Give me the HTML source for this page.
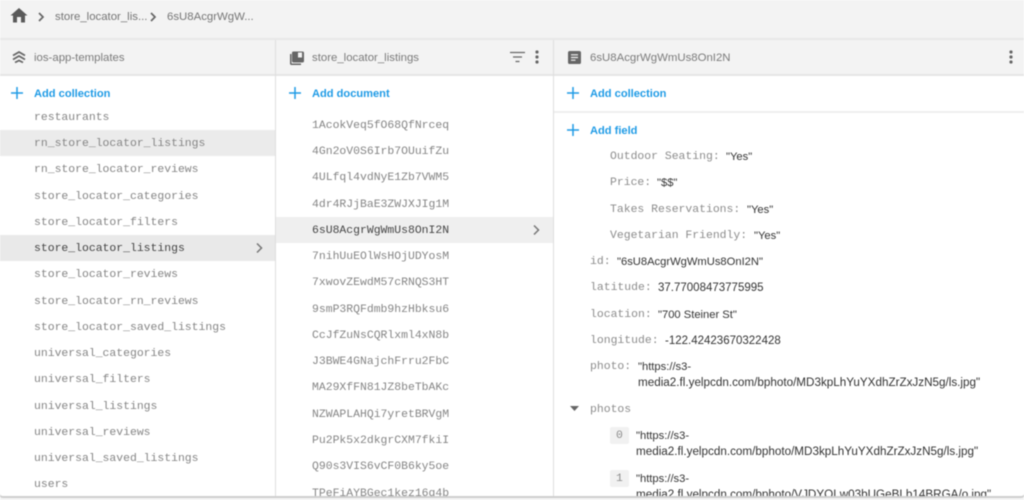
<!DOCTYPE html>
<html><head><meta charset="utf-8">
<style>
html,body{margin:0;padding:0;width:1024px;height:500px;overflow:hidden;background:#fff}
#r{position:relative;width:1024px;height:500px;overflow:hidden;background:#fff;filter:blur(0.45px)}
.a{position:absolute;white-space:nowrap}
.s{font-family:"Liberation Sans",sans-serif;font-size:11.4px;line-height:14px}
.m{font-family:"Liberation Mono",monospace;font-size:11.43px;line-height:14px;color:#858585;margin-top:1px}
.k{font-family:"Liberation Mono",monospace;font-size:11.43px;line-height:14px;color:#8c8c8c;margin-top:1px}
.v{font-family:"Liberation Sans",sans-serif;font-size:11.2px;line-height:14px;color:#333}
.u{font-size:11.68px}
.n{font-size:11.5px}
.b{color:#1f9be6;font-weight:bold;font-family:"Liberation Sans",sans-serif;font-size:11.1px;line-height:14px}
.g{color:#757575}
svg{position:absolute}
</style></head><body><div id="r">
<div class="a" style="left:0;top:0;width:1024px;height:38px;background:#f3f3f3"></div>
<div class="a" style="left:0;top:38px;width:1024px;height:2px;background:#e8e8e8"></div>
<div class="a" style="left:0;top:40px;width:1024px;height:34px;background:#f3f3f3"></div>
<div class="a" style="left:0;top:74px;width:1024px;height:2px;background:#e6e6e6"></div>
<div class="a" style="left:553px;top:111px;width:471px;height:2px;background:#efefef"></div>
<div class="a" style="left:0;top:130px;width:275px;height:26px;background:#ebebeb"></div>
<div class="a" style="left:0;top:235px;width:275px;height:26px;background:#e9e9e9"></div>
<div class="a" style="left:276px;top:217px;width:277px;height:26px;background:#efefef"></div>
<div class="a" style="left:275px;top:40px;width:1px;height:460px;background:#dedede"></div>
<div class="a" style="left:553px;top:40px;width:1px;height:460px;background:#dedede"></div>

<svg style="left:10px;top:7px" width="18" height="17" viewBox="0 0 18 17"><path d="M7 15.500V10h4v5.500h4V8.500h2.500L9 1 .5 8.500H3v7z" fill="#5a5a5a"/></svg>
<svg style="left:37px;top:12px" width="8" height="10" viewBox="0 0 8 10"><path d="M2 1l4 4-4 4" fill="none" stroke="#666" stroke-width="1.700"/></svg>
<div class="a s g" style="left:55px;top:10px">store_locator_lis...</div>
<svg style="left:149px;top:12px" width="8" height="10" viewBox="0 0 8 10"><path d="M2 1l4 4-4 4" fill="none" stroke="#666" stroke-width="1.700"/></svg>
<div class="a s g" style="left:167px;top:10px">6sU8AcgrWgW...</div>

<svg style="left:12px;top:50px" width="14" height="15" viewBox="0 0 14 15"><path d="M1 5.500L7 2l6 3.500M1 9.500L7 6l6 3.500M3 12.500L7 10.500l4 2" fill="none" stroke="#666" stroke-width="1.800"/></svg>
<div class="a s" style="left:34px;top:51px;color:#7b7b7b">ios-app-templates</div>
<svg style="left:289px;top:50px" width="16" height="16" viewBox="0 0 16 16"><path d="M1 4h1.500v9.500H12V15H2.500A1.500 1.500 0 0 1 1 13.500z" fill="#666"/><path d="M4.500 1.500h9A1.500 1.500 0 0 1 15 3v8a1.500 1.500 0 0 1-1.500 1.500h-9A1.500 1.500 0 0 1 3 11V3a1.500 1.500 0 0 1 1.500-1.500z" fill="#666"/><rect x="9" y="2.500" width="4" height="5" fill="#f3f3f3"/></svg>
<div class="a s" style="left:312px;top:51px;color:#7b7b7b">store_locator_listings</div>
<svg style="left:509px;top:50px" width="16" height="14" viewBox="0 0 16 14"><path d="M1 2.500h15M4 7h9M6.500 11.500h4" stroke="#666" stroke-width="1.300" fill="none"/></svg>
<svg style="left:533px;top:49px" width="8" height="16" viewBox="0 0 8 16"><circle cx="4" cy="3" r="1.600" fill="#666"/><circle cx="4" cy="8" r="1.600" fill="#666"/><circle cx="4" cy="13" r="1.600" fill="#666"/></svg>
<svg style="left:568px;top:51px" width="13" height="13" viewBox="0 0 13 13"><rect width="13" height="13" rx="1.800" fill="#666"/><path d="M3 3.800h7M3 6.500h7M3 9.200h4.500" stroke="#f3f3f3" stroke-width="1.200"/></svg>
<div class="a s" style="left:590px;top:51px;color:#7b7b7b">6sU8AcgrWgWmUs8OnI2N</div>
<svg style="left:1007px;top:49px" width="8" height="16" viewBox="0 0 8 16"><circle cx="4" cy="3" r="1.600" fill="#666"/><circle cx="4" cy="8" r="1.600" fill="#666"/><circle cx="4" cy="13" r="1.600" fill="#666"/></svg>

<svg style="left:11px;top:87px" width="12" height="12" viewBox="0 0 12 12"><path d="M6 0v12M0 6h12" stroke="#1f9be6" stroke-width="1.500"/></svg>
<div class="a b" style="left:34px;top:87px">Add collection</div>
<svg style="left:289px;top:87px" width="12" height="12" viewBox="0 0 12 12"><path d="M6 0v12M0 6h12" stroke="#1f9be6" stroke-width="1.500"/></svg>
<div class="a b" style="left:312px;top:87px">Add document</div>
<svg style="left:567px;top:87px" width="12" height="12" viewBox="0 0 12 12"><path d="M6 0v12M0 6h12" stroke="#1f9be6" stroke-width="1.500"/></svg>
<div class="a b" style="left:590px;top:87px">Add collection</div>
<svg style="left:567px;top:124px" width="12" height="12" viewBox="0 0 12 12"><path d="M6 0v12M0 6h12" stroke="#1f9be6" stroke-width="1.500"/></svg>
<div class="a b" style="left:590px;top:124px">Add field</div>

<div class="a m" style="left:34px;top:110px">restaurants</div>
<div class="a m" style="left:34px;top:136px">rn_store_locator_listings</div>
<div class="a m" style="left:34px;top:162px">rn_store_locator_reviews</div>
<div class="a m" style="left:34px;top:189px">store_locator_categories</div>
<div class="a m" style="left:34px;top:215px">store_locator_filters</div>
<div class="a m" style="left:34px;top:241px;color:#444">store_locator_listings</div>
<svg style="left:255px;top:242px" width="9" height="12" viewBox="0 0 9 12"><path d="M2 1.500L6.500 6 2 10.500" fill="none" stroke="#777" stroke-width="1.500"/></svg>
<div class="a m" style="left:34px;top:267px">store_locator_reviews</div>
<div class="a m" style="left:34px;top:294px">store_locator_rn_reviews</div>
<div class="a m" style="left:34px;top:320px">store_locator_saved_listings</div>
<div class="a m" style="left:34px;top:346px">universal_categories</div>
<div class="a m" style="left:34px;top:372px">universal_filters</div>
<div class="a m" style="left:34px;top:399px">universal_listings</div>
<div class="a m" style="left:34px;top:425px">universal_reviews</div>
<div class="a m" style="left:34px;top:451px">universal_saved_listings</div>
<div class="a m" style="left:34px;top:477px">users</div>

<div class="a m" style="left:312px;top:118px">1AcokVeq5fO68QfNrceq</div>
<div class="a m" style="left:312px;top:144px">4Gn2oV0S6Irb7OUuifZu</div>
<div class="a m" style="left:312px;top:170px">4ULfql4vdNyE1Zb7VWM5</div>
<div class="a m" style="left:312px;top:197px">4dr4RJjBaE3ZWJXJIg1M</div>
<div class="a m" style="left:312px;top:223px;color:#444">6sU8AcgrWgWmUs8OnI2N</div>
<svg style="left:532px;top:224px" width="9" height="12" viewBox="0 0 9 12"><path d="M2 1.500L6.500 6 2 10.500" fill="none" stroke="#777" stroke-width="1.500"/></svg>
<div class="a m" style="left:312px;top:249px">7nihUuEOlWsHOjUDYosM</div>
<div class="a m" style="left:312px;top:275px">7xwovZEwdM57cRNQS3HT</div>
<div class="a m" style="left:312px;top:302px">9smP3RQFdmb9hzHbksu6</div>
<div class="a m" style="left:312px;top:328px">CcJfZuNsCQRlxml4xN8b</div>
<div class="a m" style="left:312px;top:354px">J3BWE4GNajchFrru2FbC</div>
<div class="a m" style="left:312px;top:380px">MA29XfFN81JZ8beTbAKc</div>
<div class="a m" style="left:312px;top:407px">NZWAPLAHQi7yretBRVgM</div>
<div class="a m" style="left:312px;top:433px">Pu2Pk5x2dkgrCXM7fkiI</div>
<div class="a m" style="left:312px;top:459px">Q90s3VIS6vCF0B6ky5oe</div>
<div class="a m" style="left:312px;top:486px">TPeFiAYBGec1kez16q4b</div>

<div class="a k" style="left:610px;top:149px">Outdoor Seating:</div><div class="a v" style="left:726px;top:150px">"Yes"</div>
<div class="a k" style="left:610px;top:175px">Price:</div><div class="a v" style="left:657px;top:176px">"$$"</div>
<div class="a k" style="left:610px;top:202px">Takes Reservations:</div><div class="a v" style="left:747px;top:203px">"Yes"</div>
<div class="a k" style="left:610px;top:228px">Vegetarian Friendly:</div><div class="a v" style="left:754px;top:229px">"Yes"</div>
<div class="a k" style="left:590px;top:254px">id:</div><div class="a v" style="left:617px;top:255px">"6sU8AcgrWgWmUs8OnI2N"</div>
<div class="a k" style="left:590px;top:280px">latitude:</div><div class="a v n" style="left:658px;top:281px">37.77008473775995</div>
<div class="a k" style="left:590px;top:307px">location:</div><div class="a v" style="left:658px;top:308px">"700 Steiner St"</div>
<div class="a k" style="left:590px;top:333px">longitude:</div><div class="a v n" style="left:665px;top:334px">-122.42423670322428</div>
<div class="a k" style="left:590px;top:359px">photo:</div><div class="a v" style="left:638px;top:360px">"https://s3-</div>
<div class="a v u" style="left:638px;top:376px">media2.fl.yelpcdn.com/bphoto/MD3kpLhYuYXdhZrZxJzN5g/ls.jpg"</div>
<svg style="left:570px;top:406px" width="9" height="6" viewBox="0 0 9 6"><path d="M0 0h9L4.500 5z" fill="#666"/></svg>
<div class="a k" style="left:590px;top:402px">photos</div>
<div class="a" style="left:610px;top:427px;width:19px;height:17px;background:#f1f1f1;border-radius:2px"></div>
<div class="a k" style="left:616px;top:428px">0</div>
<div class="a v" style="left:636px;top:429px">"https://s3-</div>
<div class="a v u" style="left:636px;top:445px">media2.fl.yelpcdn.com/bphoto/MD3kpLhYuYXdhZrZxJzN5g/ls.jpg"</div>
<div class="a" style="left:610px;top:470px;width:19px;height:17px;background:#f1f1f1;border-radius:2px"></div>
<div class="a k" style="left:616px;top:471px">1</div>
<div class="a v" style="left:636px;top:472px">"https://s3-</div>
<div class="a v u" style="left:636px;top:488px">media2.fl.yelpcdn.com/bphoto/VJDYOLw03bUGeBLb14BRGA/o.jpg"</div>

<div class="a" style="left:0;top:497px;width:1024px;height:3px;background:#f4f4f4"></div>
<div class="a" style="left:-1px;top:480px;width:1026px;height:18px;border-bottom:2px solid #cfcfcf;border-left:1px solid #cfcfcf;border-right:1px solid #cfcfcf;border-radius:0 0 4px 4px;box-sizing:border-box"></div>
</div></body></html>
